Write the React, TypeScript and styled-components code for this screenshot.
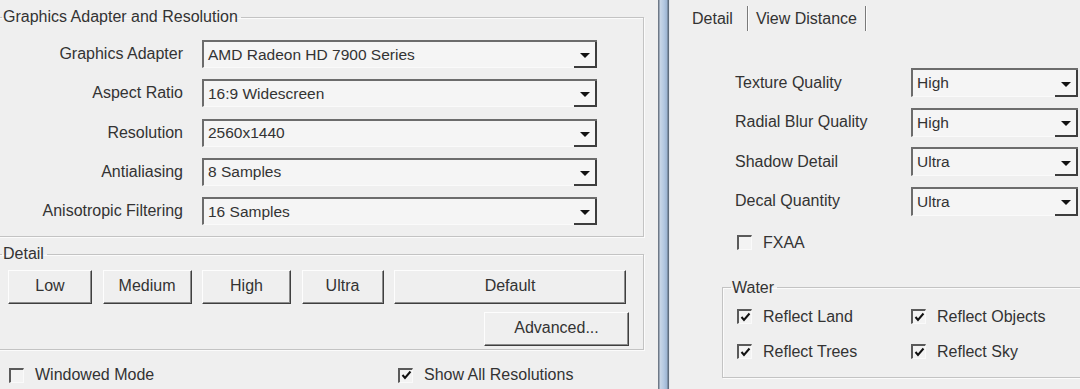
import { Fragment } from 'react';
import { createGlobalStyle, styled } from 'styled-components';

const GlobalStyle = createGlobalStyle`
  html, body {
    margin: 0;
    padding: 0;
    background: #efefef;
  }
  body {
    font-family: "Liberation Sans", Arial, sans-serif;
    font-size: 16px;
    color: #2a2a2a;
  }
`;

const Window = styled.div`
  width: 1080px;
  height: 389px;
  display: flex;
  overflow: hidden;
  background: #efefef;
`;

const LeftPane = styled.div`
  width: 658px;
  flex-shrink: 0;
`;

const Divider = styled.div`
  width: 12px;
  flex-shrink: 0;
  background: linear-gradient(
    to right,
    #6e7987 0px,
    #6e7987 1px,
    #c9d7e8 2px,
    #b3c8e1 6px,
    #9db5d3 9px,
    #5f6d7d 10px,
    #5f6d7d 11px,
    #e4e8ee 11px
  );
`;

const RightPane = styled.div`
  flex: 1;
  min-width: 0;
  padding-left: 22px;
`;

const Group = styled.fieldset<{ $mt: number; $ml: number; $width: string; $pad: string }>`
  margin: ${p => p.$mt}px 0 0 ${p => p.$ml}px;
  width: ${p => p.$width};
  box-sizing: border-box;
  padding: ${p => p.$pad};
  border: 1px solid #c3c3c3;
  box-shadow: inset 1px 1px 0 #fbfbfb, 1px 1px 0 #fbfbfb;
  min-width: 0;
`;

const Legend = styled.legend`
  padding: 0 3px 0 1px;
  line-height: 18px;
  font-size: 16px;
  color: #333;
`;

const FormGrid = styled.div<{ $labelW: number; $selectW: number; $rowH: number; $gap: number; $align: string }>`
  display: grid;
  grid-template-columns: ${p => p.$labelW}px ${p => p.$selectW}px;
  grid-auto-rows: ${p => p.$rowH}px;
  row-gap: ${p => p.$gap}px;
  align-items: center;

  & > label {
    text-align: ${p => p.$align};
    padding-right: ${p => (p.$align === 'right' ? 19 : 0)}px;
  }
`;

const FieldLabel = styled.label`
  white-space: nowrap;
  color: #333;
`;

const Combo = styled.div`
  height: 100%;
  box-sizing: border-box;
  display: flex;
  background: #f5f5f5;
  border-top: 2px solid #6c6c6c;
  border-left: 2px solid #6c6c6c;
  border-bottom: 1px solid #fafafa;
`;

const ComboValue = styled.div`
  flex: 1;
  display: flex;
  align-items: center;
  padding-left: 4px;
  font-size: 15.5px;
  color: #333;
  white-space: nowrap;
  overflow: hidden;
`;

const DropButton = styled.div`
  width: 23px;
  flex-shrink: 0;
  display: flex;
  align-items: center;
  justify-content: center;
  padding-top: 3px;
  box-sizing: border-box;
  border-right: 2px solid #3d3d3d;
  border-bottom: 2px solid #3d3d3d;
  margin-bottom: -1px;

  &::after {
    content: '';
    border-left: 5px solid transparent;
    border-right: 5px solid transparent;
    border-top: 5px solid #111;
  }
`;

const ButtonRow = styled.div<{ $end?: boolean; $mt: number }>`
  display: flex;
  gap: 10.5px;
  margin-top: ${p => p.$mt}px;
  justify-content: ${p => (p.$end ? 'flex-end' : 'flex-start')};
  padding-left: ${p => (p.$end ? 0 : 6)}px;
  padding-right: ${p => (p.$end ? 14 : 0)}px;
`;

const PushButton = styled.button<{ $w: number }>`
  width: ${p => p.$w}px;
  height: 34px;
  font-family: "Liberation Sans", Arial, sans-serif;
  font-size: 16px;
  color: #333;
  background: #efefef;
  border-top: 1px solid #fdfdfd;
  border-left: 1px solid #fdfdfd;
  border-right: 1px solid #3f3f3f;
  border-bottom: 1px solid #3f3f3f;
  box-shadow: inset -1px -1px 0 #8c8c8c;
  padding: 0 0 2px 0;
  border-radius: 0;
`;

const CheckLine = styled.div<{ $mt?: number; $pl?: number }>`
  display: flex;
  align-items: center;
  height: 18px;
  margin-top: ${p => p.$mt ?? 0}px;
  padding-left: ${p => p.$pl ?? 0}px;
`;

const CheckItem = styled.div<{ $w?: number }>`
  display: flex;
  align-items: center;
  gap: 11px;
  width: ${p => (p.$w ? `${p.$w}px` : 'auto')};
  flex-shrink: 0;
  white-space: nowrap;
  color: #333;
`;

const Box = styled.span`
  width: 15px;
  height: 15px;
  box-sizing: border-box;
  display: inline-flex;
  align-items: center;
  justify-content: center;
  background: #f3f3f3;
  border-top: 2px solid #5a5a5a;
  border-left: 2px solid #5a5a5a;
  border-right: 1px solid #fafafa;
  border-bottom: 1px solid #fafafa;
`;

const Tabs = styled.div`
  display: flex;
  align-items: center;
  height: 25px;
  margin-top: 6px;
`;

const Tab = styled.div<{ $first?: boolean }>`
  height: 25px;
  display: flex;
  align-items: center;
  padding: 0 ${p => (p.$first ? 14 : 8)}px 0 ${p => (p.$first ? 0 : 8)}px;
  border-right: 1px solid #7a7a7a;
  box-shadow: 1px 0 0 #fdfdfd;
  color: #333;
`;

const DetailForm = styled.div`
  padding-left: 43px;
  margin-top: 37px;
`;

const WaterRows = styled.div`
  display: flex;
  flex-direction: column;
  gap: 17px;
  padding-top: 11px;
  padding-left: 6px;
`;

function Check({ label, checked, width }: { label: string; checked?: boolean; width?: number }) {
  return (
    <CheckItem $w={width}>
      <Box>
        {checked && (
          <svg width="11" height="11" viewBox="0 0 11 11">
            <polyline points="1.5,5 4,8 9.5,1.5" fill="none" stroke="#111" strokeWidth="2" />
          </svg>
        )}
      </Box>
      {label}
    </CheckItem>
  );
}

const adapterRows = [
  ['Graphics Adapter', 'AMD Radeon HD 7900 Series'],
  ['Aspect Ratio', '16:9 Widescreen'],
  ['Resolution', '2560x1440'],
  ['Antialiasing', '8 Samples'],
  ['Anisotropic Filtering', '16 Samples'],
];

const detailRows = [
  ['Texture Quality', 'High'],
  ['Radial Blur Quality', 'High'],
  ['Shadow Detail', 'Ultra'],
  ['Decal Quantity', 'Ultra'],
];

const presets = [
  { label: 'Low', w: 84 },
  { label: 'Medium', w: 89 },
  { label: 'High', w: 89 },
  { label: 'Ultra', w: 82 },
  { label: 'Default', w: 232 },
];

export default function App() {
  return (
    <>
      <GlobalStyle />
      <Window>
        <LeftPane>
          <Group $mt={8} $ml={-8} $width="652px" $pad="14px 0 11px 9px">
            <Legend>Graphics Adapter and Resolution</Legend>
            <FormGrid $labelW={200} $selectW={395} $rowH={28} $gap={11.25} $align="right">
              {adapterRows.map(([label, value]) => (
                <Fragment key={label}>
                  <FieldLabel>{label}</FieldLabel>
                  <Combo>
                    <ComboValue>{value}</ComboValue>
                    <DropButton />
                  </Combo>
                </Fragment>
              ))}
            </FormGrid>
          </Group>

          <Group $mt={8} $ml={-8} $width="652px" $pad="0 0 3px 9px">
            <Legend>Detail</Legend>
            <ButtonRow $mt={7}>
              {presets.map(p => (
                <PushButton key={p.label} $w={p.w}>{p.label}</PushButton>
              ))}
            </ButtonRow>
            <ButtonRow $end $mt={8}>
              <PushButton $w={145}>Advanced...</PushButton>
            </ButtonRow>
          </Group>

          <CheckLine $mt={16} $pl={9}>
            <Check label="Windowed Mode" width={389} />
            <Check label="Show All Resolutions" checked />
          </CheckLine>
        </LeftPane>

        <Divider />

        <RightPane>
          <Tabs>
            <Tab $first>Detail</Tab>
            <Tab>View Distance</Tab>
          </Tabs>

          <DetailForm>
            <FormGrid $labelW={176} $selectW={167} $rowH={29} $gap={10.5} $align="left">
              {detailRows.map(([label, value]) => (
                <Fragment key={label}>
                  <FieldLabel>{label}</FieldLabel>
                  <Combo>
                    <ComboValue>{value}</ComboValue>
                    <DropButton />
                  </Combo>
                </Fragment>
              ))}
            </FormGrid>

            <CheckLine $mt={18} $pl={2}>
              <Check label="FXAA" />
            </CheckLine>
          </DetailForm>

          <Group $mt={27} $ml={30} $width="400px" $pad="0 0 16px 8px">
            <Legend>Water</Legend>
            <WaterRows>
              <CheckLine>
                <Check label="Reflect Land" checked width={174} />
                <Check label="Reflect Objects" checked />
              </CheckLine>
              <CheckLine>
                <Check label="Reflect Trees" checked width={174} />
                <Check label="Reflect Sky" checked />
              </CheckLine>
            </WaterRows>
          </Group>
        </RightPane>
      </Window>
    </>
  );
}
